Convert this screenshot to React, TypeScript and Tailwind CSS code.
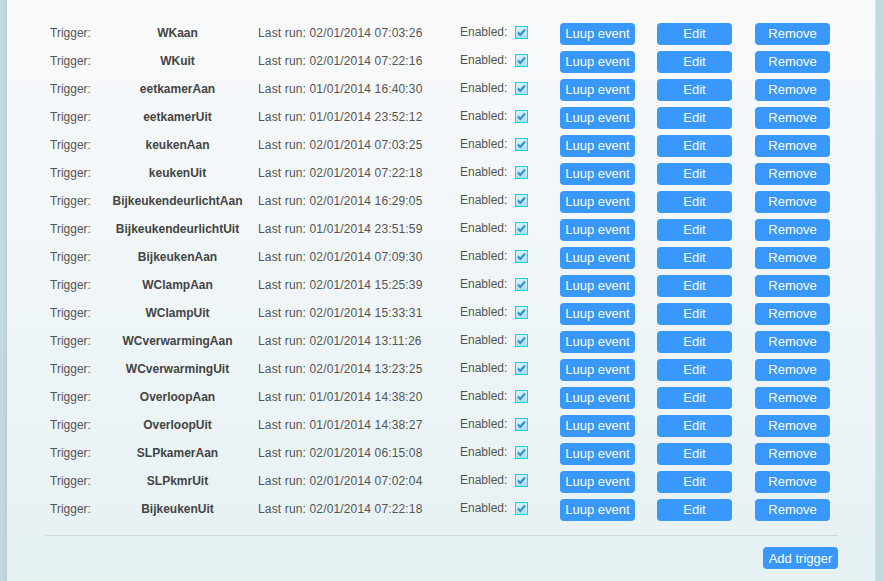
import React from 'react';

const triggers: [string, string][] = [
  ['WKaan', '02/01/2014 07:03:26'],
  ['WKuit', '02/01/2014 07:22:16'],
  ['eetkamerAan', '01/01/2014 16:40:30'],
  ['eetkamerUit', '01/01/2014 23:52:12'],
  ['keukenAan', '02/01/2014 07:03:25'],
  ['keukenUit', '02/01/2014 07:22:18'],
  ['BijkeukendeurlichtAan', '02/01/2014 16:29:05'],
  ['BijkeukendeurlichtUit', '01/01/2014 23:51:59'],
  ['BijkeukenAan', '02/01/2014 07:09:30'],
  ['WClampAan', '02/01/2014 15:25:39'],
  ['WClampUit', '02/01/2014 15:33:31'],
  ['WCverwarmingAan', '02/01/2014 13:11:26'],
  ['WCverwarmingUit', '02/01/2014 13:23:25'],
  ['OverloopAan', '01/01/2014 14:38:20'],
  ['OverloopUit', '01/01/2014 14:38:27'],
  ['SLPkamerAan', '02/01/2014 06:15:08'],
  ['SLPkmrUit', '02/01/2014 07:02:04'],
  ['BijkeukenUit', '02/01/2014 07:22:18'],
];

function Check() {
  return (
    <svg width="13" height="13" viewBox="0 0 13 13" className="block">
      <defs>
        <linearGradient id="cb" x1="0" y1="0" x2="0" y2="1">
          <stop offset="0" stopColor="#d8f3fb" />
          <stop offset="1" stopColor="#a8def0" />
        </linearGradient>
      </defs>
      <rect x="0.5" y="0.5" width="12" height="12" fill="url(#cb)" stroke="#12d0ee" />
      <path d="M3 6.5 L5.3 9 L10 3.5" fill="none" stroke="#2a8fd6" strokeWidth="2" />
    </svg>
  );
}

function Btn({ children }: { children: React.ReactNode }) {
  return (
    <button className="w-[75px] h-[22px] rounded-[4px] bg-[#3898fb] text-white text-[13px] leading-none">
      {children}
    </button>
  );
}

export default function App() {
  return (
    <div
      className="w-[883px] h-[581px] bg-[#c3d9e0] flex text-[12px] text-[#555]"
      style={{ fontFamily: '"Liberation Sans", Arial, sans-serif' }}
    >
      <div className="ml-[7px] w-[869px] h-full bg-gradient-to-b from-[#f9fafc] to-[#e6f1f4] border-r border-[#d3e2e7] shadow-[-2px_0_3px_rgba(0,0,0,0.06)] pt-[19px]">
        <div className="ml-[38px] w-[793px]">
          {triggers.map(([name, run]) => (
            <div key={name} className="flex items-center h-[28px]">
              <span className="w-[60px] pl-[5px]">Trigger:</span>
              <span className="w-[145px] text-center font-bold text-[#444]">{name}</span>
              <span className="w-[205px] pl-[8px] tracking-[0.15px]">Last run: {run}</span>
              <span className="w-[100px] pl-[5px] flex items-center gap-[8px] -mt-[2px]">
                Enabled:
                <Check />
              </span>
              <span className="w-[97px] pl-[5px] pt-[1px]">
                <Btn>Luup event</Btn>
              </span>
              <span className="w-[98px] pl-[5px] pt-[1px]">
                <Btn>Edit</Btn>
              </span>
              <span className="pl-[5px] pt-[1px]">
                <Btn>Remove</Btn>
              </span>
            </div>
          ))}
          <div className="mt-[12px] border-t border-[#d4d9dc]" />
          <div className="flex justify-end mt-[11px]">
            <button className="w-[75px] h-[22px] rounded-[4px] bg-[#3898fb] text-white text-[13px] leading-none">
              Add trigger
            </button>
          </div>
        </div>
      </div>
    </div>
  );
}
